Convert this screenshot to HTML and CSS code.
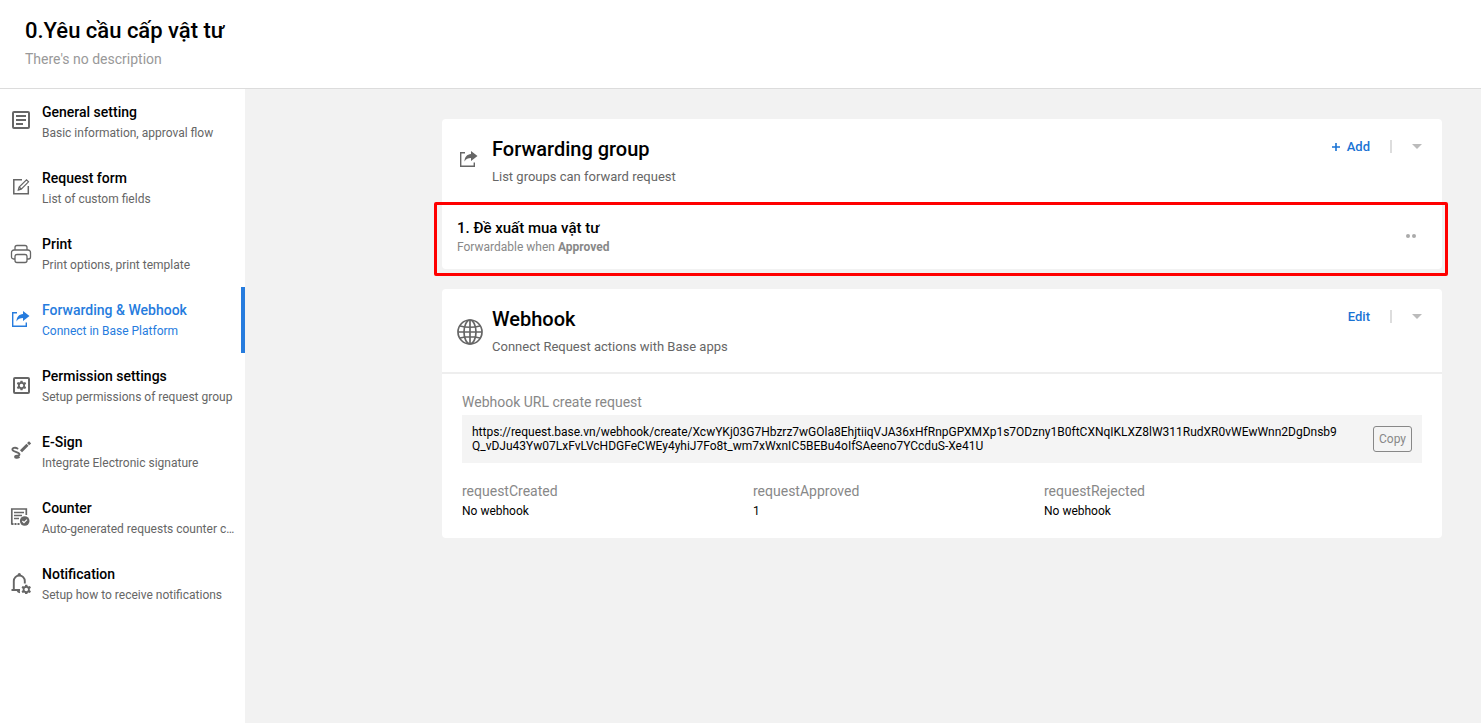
FILE: index.html
```html
<!DOCTYPE html>
<html lang="vi">
<head>
<meta charset="utf-8">
<meta name="viewport" content="width=device-width, initial-scale=1">
<title>0.Yêu cầu cấp vật tư</title>
<link rel="stylesheet" href="styles.css">
</head>
<body>
<svg class="sprite" aria-hidden="true">
  <symbol id="gear" viewBox="0 0 10 10">
    <path fill="currentColor" fill-rule="evenodd" d="M4 0h2l.3 1.500.9.5 1.500-.5 1 1.700-1.200 1v1.600l1.200 1-1 1.700-1.500-.5-.9.5L6 10H4l-.3-1.500-.9-.5-1.500.5-1-1.700 1.200-1V4.200l-1.200-1 1-1.700 1.500.5.9-.5zM5 3.200a1.800 1.800 0 1 0 0 3.600 1.800 1.800 0 0 0 0-3.600z"/>
  </symbol>
</svg>

<header class="page-header">
  <h1 class="page-title">0.Yêu cầu cấp vật tư</h1>
  <p class="page-desc">There's no description</p>
</header>

<div class="layout">
  <nav class="sidebar">
    <a class="nav-item" href="#general">
      <svg class="nav-icon" viewBox="0 0 24 24" fill="none" stroke="currentColor" stroke-width="2"><rect x="4" y="4" width="16" height="16" rx="1"/><path d="M7 8h10M7 12h10M7 16h7"/></svg>
      <span class="nav-text"><span class="nav-title">General setting</span><span class="nav-sub">Basic information, approval flow</span></span>
    </a>
    <a class="nav-item" href="#form">
      <svg class="nav-icon" viewBox="0 0 24 24" fill="none" stroke="currentColor" stroke-width="1.500"><path d="M13 5.800H4.800v14h14.500V12"/><path stroke-width="1.200" d="M9.300 16l.8-3 7.400-7.200 2 2-7.300 7.300zM10.200 13l2 2"/></svg>
      <span class="nav-text"><span class="nav-title">Request form</span><span class="nav-sub">List of custom fields</span></span>
    </a>
    <a class="nav-item" href="#print">
      <svg class="nav-icon" viewBox="0 0 24 24" fill="none" stroke="currentColor" stroke-width="1.300"><path d="M6 10V7.500a2 2 0 0 1 2-2h8a2 2 0 0 1 2 2V10M6 19H4.500a2 2 0 0 1-2-2v-4.500a2.500 2.500 0 0 1 2.500-2.500h14a2.500 2.500 0 0 1 2.500 2.500V17a2 2 0 0 1-2 2H18"/><rect x="6" y="14.500" width="12" height="8" rx="2"/></svg>
      <span class="nav-text"><span class="nav-title">Print</span><span class="nav-sub">Print options, print template</span></span>
    </a>
    <a class="nav-item is-active" href="#forwarding" aria-current="page">
      <svg class="nav-icon" viewBox="0 0 24 24"><path fill="none" stroke="currentColor" stroke-width="1.400" d="M8 6.700H3.700v13.600h13.600V16.500"/><path fill="currentColor" d="M14 5l6.500 5-6.500 5v-3c-3 0-5 .8-6.500 3.500C7.500 11 10 8.300 14 8z"/></svg>
      <span class="nav-text"><span class="nav-title">Forwarding &amp; Webhook</span><span class="nav-sub">Connect in Base Platform</span></span>
    </a>
    <a class="nav-item" href="#permission">
      <svg class="nav-icon" viewBox="0 0 24 24"><rect x="5" y="6" width="15" height="15" rx="1" fill="none" stroke="currentColor" stroke-width="2"/><use href="#gear" x="7.500" y="8.500" width="10" height="10"/></svg>
      <span class="nav-text"><span class="nav-title">Permission settings</span><span class="nav-sub">Setup permissions of request group</span></span>
    </a>
    <a class="nav-item" href="#esign">
      <svg class="nav-icon" viewBox="0 0 24 24" fill="none" stroke="currentColor"><path stroke-width="1.900" stroke-linecap="round" d="M8.500 10.500C6 9 3 10 3.500 12c.5 2 7 2 7 4.500C10.500 18.500 6 17 6 18.700c0 1.300 2.500 1.500 4 .5"/><path stroke-width="3" d="M12 13.200l6.500-6.400"/><path stroke-width="3" d="M19.100 6.200l2-1.900"/></svg>
      <span class="nav-text"><span class="nav-title">E-Sign</span><span class="nav-sub">Integrate Electronic signature</span></span>
    </a>
    <a class="nav-item" href="#counter">
      <svg class="nav-icon" viewBox="0 0 24 24" fill="none" stroke="currentColor" stroke-width="1.700"><path d="M17.300 11V5H2.800v15.500M5 8.500h10M5 11.500h8M5 14.500h5"/><path stroke-dasharray="2 1" stroke-width="1.800" d="M2.500 20h8"/><circle cx="15.700" cy="17" r="4.800" fill="currentColor" stroke="none"/><path class="tick" d="M13.400 17l1.600 1.600 3-3"/></svg>
      <span class="nav-text"><span class="nav-title">Counter</span><span class="nav-sub">Auto-generated requests counter c…</span></span>
    </a>
    <a class="nav-item" href="#notification">
      <svg class="nav-icon" viewBox="0 0 24 24"><path fill="none" stroke="currentColor" stroke-width="1.900" d="M2.500 20H11M4.800 20v-9a5.500 5.500 0 0 1 11 0v2.500M8.500 20.500q.5 1.800 2.500 1.800"/><circle cx="10.300" cy="4.600" r="1.600" fill="currentColor"/><use href="#gear" x="12" y="14.500" width="10.500" height="10"/></svg>
      <span class="nav-text"><span class="nav-title">Notification</span><span class="nav-sub">Setup how to receive notifications</span></span>
    </a>
  </nav>

  <main class="content">
    <section class="card">
      <div class="card-head">
        <svg class="card-icon" viewBox="0 2 28 28"><path fill="none" stroke="currentColor" stroke-width="1.400" d="M9 6.700H4.700v13.600h13.600V16.500"/><path fill="currentColor" d="M15 5l6.500 5-6.500 5v-3c-3 0-5 .8-6.500 3.500C8.500 11 11 8.300 15 8z"/></svg>
        <div class="card-heading">
          <h2 class="card-title">Forwarding group</h2>
          <p class="card-sub">List groups can forward request</p>
        </div>
        <div class="card-actions">
          <button class="action" type="button"><svg class="plus" viewBox="0 0 10 10" fill="none" stroke="currentColor" stroke-width="1.600"><path d="M5 1v8M1 5h8"/></svg>Add</button>
          <span class="divider"></span>
          <button class="caret" type="button" aria-label="More options"></button>
        </div>
      </div>
      <div class="group-row">
        <div class="group-text">
          <h3 class="group-title">1. Đề xuất mua vật tư</h3>
          <p class="group-sub">Forwardable when <b>Approved</b></p>
        </div>
        <button class="dots" type="button" aria-label="Group menu"><i class="dot"></i><i class="dot"></i></button>
        <span class="highlight"></span>
      </div>
    </section>

    <section class="card">
      <div class="card-head card-head-lined">
        <svg class="card-icon" viewBox="0 0 28 28" fill="none" stroke="currentColor" stroke-width="1.700"><circle cx="14" cy="14" r="12"/><ellipse cx="14" cy="14" rx="6" ry="12"/><path d="M14 2v24M2 14h24M4 8q10 2.500 20 0M4 20q10-2.500 20 0"/></svg>
        <div class="card-heading">
          <h2 class="card-title">Webhook</h2>
          <p class="card-sub">Connect Request actions with Base apps</p>
        </div>
        <div class="card-actions">
          <button class="action" type="button">Edit</button>
          <span class="divider"></span>
          <button class="caret" type="button" aria-label="More options"></button>
        </div>
      </div>
      <div class="webhook-body">
        <h3 class="field-label">Webhook URL create request</h3>
        <div class="url-box">
          <p class="url">https://request.base.vn/webhook/create/XcwYKj03G7Hbzrz7wGOla8EhjtiiqVJA36xHfRnpGPXMXp1s7ODzny1B0ftCXNqIKLXZ8lW311RudXR0vWEwWnn2DgDnsb9<wbr>Q_vDJu43Yw07LxFvLVcHDGFeCWEy4yhiJ7Fo8t_wm7xWxnIC5BEBu4oIfSAeeno7YCcduS-Xe41U</p>
          <button class="copy" type="button">Copy</button>
        </div>
        <dl class="events">
          <div><dt class="field-label">requestCreated</dt><dd class="event-value">No webhook</dd></div>
          <div><dt class="field-label">requestApproved</dt><dd class="event-value">1</dd></div>
          <div><dt class="field-label">requestRejected</dt><dd class="event-value">No webhook</dd></div>
        </dl>
      </div>
    </section>
  </main>
</div>
</body>
</html>
```
FILE: styles.css
```css
* { box-sizing: border-box; margin: 0; padding: 0; }

body {
  display: flex;
  flex-direction: column;
  min-height: 100vh;
  background: #f2f2f2;
  color: #000;
  font-family: Roboto, "Liberation Sans", sans-serif;
  font-size: 12px;
}

button { border: 0; background: none; font: inherit; cursor: pointer; }

.sprite { position: absolute; width: 0; height: 0; }

.page-header {
  padding: 16px 25px 18px;
  background: #fff;
  border-bottom: 1px solid #dcdcdc;
}
.page-title { font-size: 22px; font-weight: 500; line-height: 30px; }
.page-desc { margin-top: 2px; color: #999; font-size: 14px; line-height: 22px; }

.layout { display: flex; flex: 1; }

.sidebar { flex: none; width: 245px; background: #fff; }
.nav-item {
  display: flex;
  gap: 9px;
  height: 66px;
  padding: 13px 5px 0 9px;
  border-right: 4px solid transparent;
  color: #666;
  text-decoration: none;
}
.nav-icon { flex: none; width: 24px; height: 24px; margin-top: 6px; }
.nav-text { display: flex; flex-direction: column; gap: 1px; white-space: nowrap; }
.nav-title { color: #000; font-size: 14px; font-weight: 500; line-height: 20px; }
.nav-sub { line-height: 20px; }
.is-active { border-right-color: #267cde; }
.is-active, .is-active .nav-title { color: #267cde; }
.tick { stroke: #fff; stroke-width: 1.3; }

.content {
  display: flex;
  flex: 1;
  flex-direction: column;
  align-items: flex-end;
  gap: 20px;
  min-width: 0;
  padding: 30px 39px;
}

.card { width: 100%; max-width: 1000px; background: #fff; border-radius: 4px; }
.card-head { display: flex; min-height: 84px; padding: 16px 20px 14px 14px; gap: 8px; }
.card-head-lined { min-height: 85px; border-bottom: 2px solid #eee; }
.card-icon { flex: none; width: 28px; height: 28px; margin-top: 13px; color: #666; }
.card-heading { flex: 1; }
.card-title { font-size: 20px; font-weight: 500; line-height: 28px; }
.card-sub { margin-top: 4px; color: #666; font-size: 13px; line-height: 20px; }

.card-actions { display: flex; align-items: center; gap: 20px; height: 23px; }
.action {
  display: flex;
  align-items: center;
  gap: 6px;
  color: #1a73d4;
  font-size: 13px;
  font-weight: 500;
  line-height: 20px;
}
.plus { width: 10px; height: 10px; }
.divider { width: 2px; height: 13px; background: #ddd; }
.caret {
  border: 5px solid transparent;
  border-top-color: #bbb;
  border-bottom-width: 0;
}

.group-row {
  position: relative;
  display: flex;
  align-items: center;
  justify-content: space-between;
  height: 66px;
  padding: 0 26px 0 15px;
}
.group-title { font-size: 15px; font-weight: 500; line-height: 20px; }
.group-sub { color: #888; line-height: 18px; }
.group-text { padding-top: 2px; }
.dots { display: flex; gap: 2px; }
.dot { width: 4px; height: 4px; border-radius: 50%; background: #aaa; }
.highlight {
  position: absolute;
  inset: -1px -6px -7px -8px;
  border: 3px solid #f00;
  border-radius: 2px;
  pointer-events: none;
}

.webhook-body { padding: 18px 20px 17px; }
.field-label { color: #888; font-size: 14px; font-weight: 400; line-height: 20px; }
.url-box {
  display: flex;
  align-items: center;
  justify-content: space-between;
  gap: 30px;
  min-height: 48px;
  margin-top: 3px;
  padding: 10px;
  background: #f4f4f4;
}
.url { min-width: 0; overflow-wrap: anywhere; line-height: 14px; }
.copy {
  flex: none;
  padding: 4px 5px;
  border: 1px solid #888;
  border-radius: 3px;
  color: #888;
  line-height: 16px;
}
.events {
  display: grid;
  grid-template-columns: repeat(3, 1fr);
  margin-top: 18px;
  padding-right: 87px;
}
.event-value { line-height: 20px; }
```
